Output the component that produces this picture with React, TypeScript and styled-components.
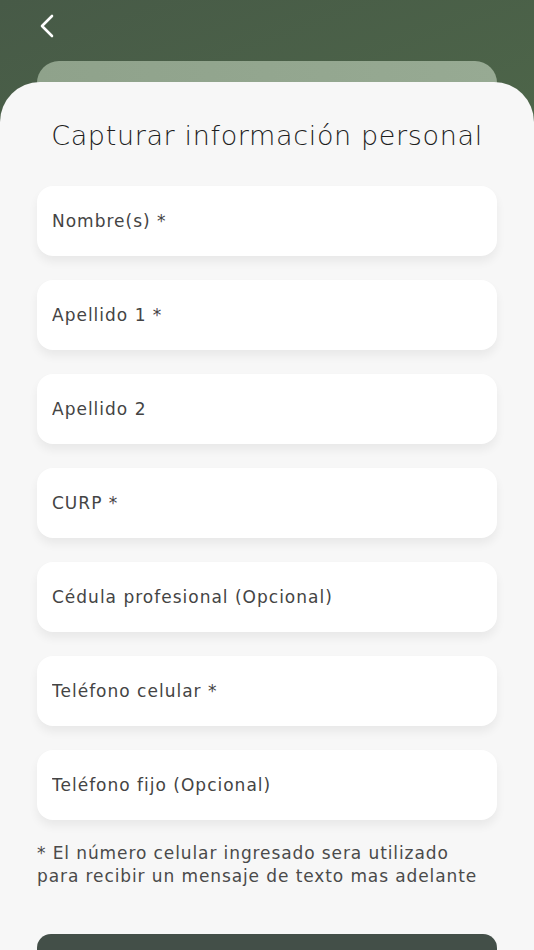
import React from "react";
import styled, { createGlobalStyle } from "styled-components";

const GlobalStyle = createGlobalStyle`
  html, body {
    margin: 0;
    padding: 0;
    height: 100%;
    overflow: hidden;
  }
  body {
    font-family: "DejaVu Sans", "Open Sans", sans-serif;
    background: #f7f7f7;
  }
`;

const Screen = styled.div`
  width: 534px;
  height: 950px;
  display: flex;
  flex-direction: column;
  background: linear-gradient(160deg, #475a47 0%, #54724b 60%, #5b7e4e 100%);
  overflow: hidden;
`;

const Header = styled.div`
  flex-shrink: 0;
  height: 61px;
  display: flex;
  align-items: flex-start;
  padding: 13px 0 0 37px;
  box-sizing: border-box;
`;

const BackButton = styled.button`
  background: none;
  border: none;
  padding: 0;
  width: 22px;
  height: 26px;
  cursor: pointer;
`;

const BackCard = styled.div`
  flex-shrink: 0;
  margin: 0 37px -19px;
  height: 40px;
  border-radius: 22px 22px 0 0;
  background: linear-gradient(90deg, #8fa28b, #97aa93);
`;

const Sheet = styled.div`
  flex: 1 0 auto;
  background: #f7f7f7;
  border-radius: 40px 40px 0 0;
  padding: 38px 37px 0;
  display: flex;
  flex-direction: column;
  position: relative;
`;

const Title = styled.h1`
  margin: 0 0 34px;
  text-align: center;
  font-weight: 300;
  font-size: 27px;
  letter-spacing: 0.65px;
  color: #1e1e1e;
  line-height: 32px;
  white-space: nowrap;
`;

const Fields = styled.div`
  display: flex;
  flex-direction: column;
  gap: 24px;
`;

const Field = styled.input`
  flex-shrink: 0;
  height: 70px;
  border: none;
  border-radius: 16px;
  background: #ffffff;
  box-shadow: 0 6px 10px rgba(0, 0, 0, 0.06);
  padding: 0 15px;
  font-family: inherit;
  font-size: 17px;
  letter-spacing: 1px;
  color: #444;
  outline: none;
  box-sizing: border-box;
  width: 100%;
  &::placeholder {
    color: #444;
  }
`;

const Note = styled.p`
  margin: 22px 0 0;
  font-size: 17px;
  line-height: 23px;
  color: #4a4a4a;
  letter-spacing: 0.9px;
  white-space: nowrap;
`;

const SubmitButton = styled.button`
  flex-shrink: 0;
  margin-top: 46px;
  height: 60px;
  border: none;
  border-radius: 14px;
  background: #434f48;
  color: #fff;
  width: 100%;
`;

const fields = [
  "Nombre(s) *",
  "Apellido 1 *",
  "Apellido 2",
  "CURP *",
  "Cédula profesional (Opcional)",
  "Teléfono celular *",
  "Teléfono fijo (Opcional)",
];

export default function App() {
  return (
    <>
      <GlobalStyle />
      <Screen>
        <Header>
          <BackButton aria-label="Regresar">
            <svg width="22" height="26" viewBox="0 0 22 26" fill="none">
              <path
                d="M15 3 L5 13 L15 23"
                stroke="#ffffff"
                strokeWidth="2.6"
                strokeLinecap="round"
                strokeLinejoin="round"
              />
            </svg>
          </BackButton>
        </Header>
        <BackCard />
        <Sheet>
          <Title>Capturar información personal</Title>
          <Fields>
            {fields.map((f) => (
              <Field key={f} placeholder={f} />
            ))}
          </Fields>
          <Note>
            * El número celular ingresado sera utilizado
            <br />
            para recibir un mensaje de texto mas adelante
          </Note>
          <SubmitButton />
        </Sheet>
      </Screen>
    </>
  );
}
